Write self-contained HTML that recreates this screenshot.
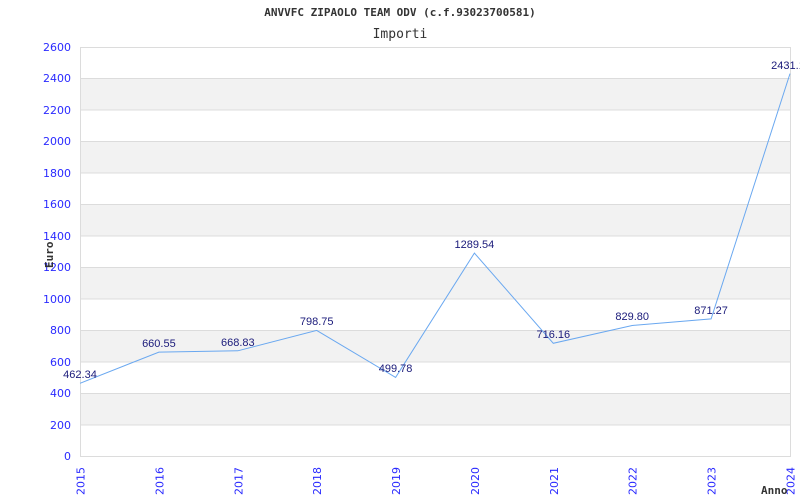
<!DOCTYPE html>
<html><head><meta charset="utf-8"><style>body{margin:0;background:#fff}svg{display:block}</style></head>
<body>
<svg width="800" height="500" xmlns="http://www.w3.org/2000/svg">
<rect width="800" height="500" fill="#fff"/>
<g fill="#f2f2f2">
<rect x="80.5" y="78.5" width="710" height="31.5"/>
<rect x="80.5" y="141.4" width="710" height="31.5"/>
<rect x="80.5" y="204.3" width="710" height="31.5"/>
<rect x="80.5" y="267.3" width="710" height="31.5"/>
<rect x="80.5" y="330.2" width="710" height="31.5"/>
<rect x="80.5" y="393.1" width="710" height="31.5"/>
</g>
<g stroke="#dcdcdc" stroke-width="1">
<line x1="80" y1="78.5" x2="790" y2="78.5"/><line x1="80" y1="110" x2="790" y2="110"/>
<line x1="80" y1="141.5" x2="790" y2="141.5"/><line x1="80" y1="173" x2="790" y2="173"/>
<line x1="80" y1="204.5" x2="790" y2="204.5"/><line x1="80" y1="236" x2="790" y2="236"/>
<line x1="80" y1="267.5" x2="790" y2="267.5"/><line x1="80" y1="299" x2="790" y2="299"/>
<line x1="80" y1="330.5" x2="790" y2="330.5"/><line x1="80" y1="362" x2="790" y2="362"/>
<line x1="80" y1="393.5" x2="790" y2="393.5"/><line x1="80" y1="425" x2="790" y2="425"/>
<rect x="80.5" y="47.5" width="710" height="409" fill="none"/>
</g>
<g font-family="DejaVu Sans, sans-serif" font-size="11" fill="#2a2aff" text-anchor="end">
<text x="71" y="51">2600</text><text x="71" y="82">2400</text><text x="71" y="114">2200</text>
<text x="71" y="145">2000</text><text x="71" y="177">1800</text><text x="71" y="208">1600</text>
<text x="71" y="240">1400</text><text x="71" y="271">1200</text><text x="71" y="303">1000</text>
<text x="71" y="334">800</text><text x="71" y="366">600</text><text x="71" y="397">400</text>
<text x="71" y="429">200</text><text x="71" y="460">0</text>
</g>
<g font-family="DejaVu Sans, sans-serif" font-size="11" fill="#2a2aff">
<text transform="translate(84.5,495) rotate(-90)">2015</text>
<text transform="translate(163.4,495) rotate(-90)">2016</text>
<text transform="translate(242.3,495) rotate(-90)">2017</text>
<text transform="translate(321.2,495) rotate(-90)">2018</text>
<text transform="translate(400.1,495) rotate(-90)">2019</text>
<text transform="translate(479,495) rotate(-90)">2020</text>
<text transform="translate(557.8,495) rotate(-90)">2021</text>
<text transform="translate(636.7,495) rotate(-90)">2022</text>
<text transform="translate(715.6,495) rotate(-90)">2023</text>
<text transform="translate(794.5,495) rotate(-90)">2024</text>
</g>
<polyline fill="none" stroke="#6aa8f0" stroke-width="1" points="80,383.3 158.9,352.1 237.8,350.8 316.7,330.4 395.6,377.4 474.4,253.1 553.3,343.3 632.2,325.5 711.1,318.9 790,73.6"/>
<g font-family="Liberation Sans, sans-serif" font-size="11" fill="#1a1a7a" text-anchor="middle">
<text x="80" y="378">462.34</text><text x="158.9" y="347">660.55</text>
<text x="237.8" y="346">668.83</text><text x="316.7" y="325">798.75</text>
<text x="395.6" y="372">499.78</text><text x="474.4" y="248">1289.54</text>
<text x="553.3" y="338">716.16</text><text x="632.2" y="320">829.80</text>
<text x="711.1" y="314">871.27</text><text x="788" y="69">2431.1</text>
</g>
<g font-family="DejaVu Sans Mono, Liberation Mono, monospace" fill="#333">
<text x="400" y="16" font-size="11" font-weight="bold" text-anchor="middle">ANVVFC ZIPAOLO TEAM ODV (c.f.93023700581)</text>
<text x="400" y="38" font-size="13" text-anchor="middle">Importi</text>
<text transform="translate(53,268) rotate(-90)" font-size="11" font-weight="bold">Euro</text>
<text x="761" y="494" font-size="11" font-weight="bold">Anno</text>
</g>
</svg>
</body></html>
